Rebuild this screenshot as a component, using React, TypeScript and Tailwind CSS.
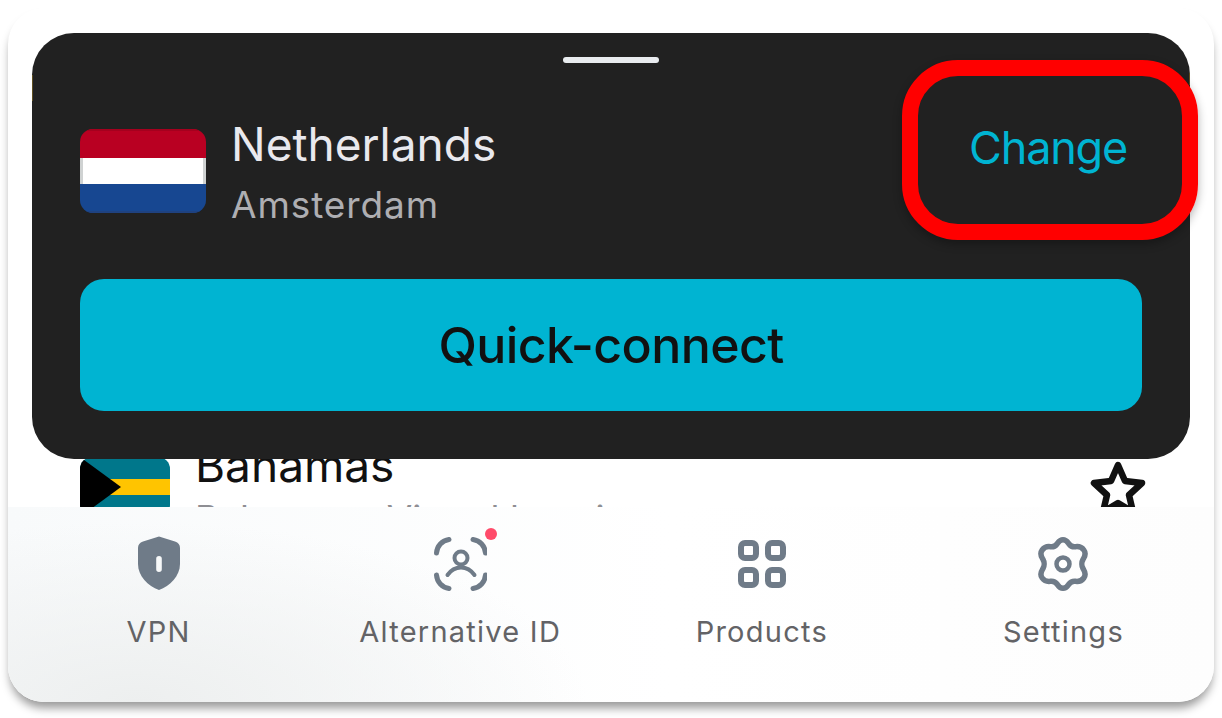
const navLabel = 'text-[29px] leading-[36px] tracking-[0.043em] text-[#636366] whitespace-nowrap'

function ShieldIcon() {
  return (
    <svg width="44" height="56" viewBox="0 0 44 56">
      <path
        fillRule="evenodd"
        fill="#6f7b88"
        d="M22 0.5 L38 5.500 Q43 7.200 43 12 V28 C43 40 33 50 22 54 C11 50 1 40 1 28 V12 Q1 7.200 6 5.500 Z M22 20 a2.800 2.800 0 0 0 -2.800 2.800 v10.400 a2.800 2.800 0 0 0 5.600 0 v-10.400 a2.800 2.800 0 0 0 -2.800 -2.800 Z"
      />
    </svg>
  )
}

function FaceIdIcon() {
  return (
    <svg width="54" height="54" viewBox="-1 0 54 54" fill="none" stroke="#6f7b88" strokeLinecap="round">
      <g strokeWidth="5">
        <path d="M2.500 16 C3 9 8 3.500 15 2.500" />
        <path d="M51.500 16 C51 9 46 3.500 39 2.500" />
        <path d="M2.500 38 C3 45 8 50.500 15 51.500" />
        <path d="M51.500 38 C51 45 46 50.500 39 51.500" />
      </g>
      <g strokeWidth="4">
        <circle cx="27" cy="21" r="6.500" />
        <path d="M13.500 38 C17 33 22 30.500 27 30.500 C32 30.500 37 33 40.500 38" />
      </g>
    </svg>
  )
}

function GridIcon() {
  return (
    <svg width="48" height="48" viewBox="0 0 48 48" fill="none" stroke="#6f7b88" strokeWidth="6">
      <rect x="3" y="3" width="15" height="15" rx="4" />
      <rect x="30" y="3" width="15" height="15" rx="4" />
      <rect x="3" y="30" width="15" height="15" rx="4" />
      <rect x="30" y="30" width="15" height="15" rx="4" />
    </svg>
  )
}

function GearIcon() {
  return (
    <svg width="52" height="54" viewBox="0 0 52 54" fill="none" stroke="#6f7b88" strokeWidth="5.5" strokeLinejoin="round">
      <path d="M26 2.750 C29.500 2.750 30.500 5 32 7 C33.500 9 36 10 38.500 9.700 C41.500 9.300 44.500 9.800 46.800 13 C49.800 17 47.500 20 46 22.500 C44.500 25 44.500 29 46 31.500 C47.500 34 49.800 37 46.800 41 C44.500 44.200 41.500 44.700 38.500 44.300 C36 44 33.500 45 32 47 C30.500 49 29.500 51.250 26 51.250 C22.500 51.250 21.500 49 20 47 C18.500 45 16 44 13.500 44.300 C10.500 44.700 7.500 44.200 5.200 41 C2.200 37 4.500 34 6 31.500 C7.500 29 7.500 25 6 22.500 C4.500 20 2.200 17 5.200 13 C7.500 9.800 10.500 9.300 13.500 9.700 C16 10 18.500 9 20 7 C21.500 5 22.500 2.750 26 2.750 Z" />
      <circle cx="26" cy="27" r="6.500" strokeWidth="4.500" />
    </svg>
  )
}

function NavItem({ icon, label, dot }: { icon: React.ReactNode; label: string; dot?: boolean }) {
  return (
    <div className="flex flex-col items-center w-[301px]">
      <div className="relative h-[60px] flex items-center justify-center">
        {icon}
        {dot && <span className="absolute -top-[6px] -right-[10px] w-[12px] h-[12px] rounded-full bg-[#ff4b6a]" />}
      </div>
      <span className={`${navLabel} mt-[20px]`}>{label}</span>
    </div>
  )
}

export default function App() {
  return (
    <div className="relative w-[1222px] h-[718px] bg-white p-[8px] pb-[16px] overflow-hidden font-['Inter',sans-serif]">
      <div className="h-full pt-[25px] flex flex-col rounded-[36px] bg-white overflow-hidden shadow-[0_8px_10px_-2px_rgba(0,0,0,0.4)]">
        {/* Bottom sheet */}
        <div className="relative z-10 shrink-0 mx-[24px] h-[426px] rounded-[42px] bg-[#212121] px-[48px] pt-[24px]">
          <span className="absolute left-0 top-[42px] w-px h-[26px] bg-[#5f4f20]" />
          <span className="absolute right-0 top-[40px] w-px h-[12px] bg-[#5f4f20]" />
          <div className="mx-auto w-[96px] h-[6px] rounded-full bg-[#e9ecef]" />
          <div className="flex items-center justify-between h-[104px] mt-[56px]">
            <div className="flex items-center gap-[25px]">
              <div className="w-[126px] h-[84px] rounded-[13px] overflow-hidden flex flex-col">
                <div className="flex-1 bg-[#b90022] border-t-2 border-[#a5001e]" />
                <div className="flex-1 bg-white border-x-[3px] border-[#cfd2d2]" />
                <div className="flex-1 bg-[#174791] border-b-2 border-[#1f4280]" />
              </div>
              <div className="flex flex-col mt-[3px] font-[370]">
                <span className="text-[46px] leading-[54px] text-[#e9e9ee]">Netherlands</span>
                <span className="text-[37px] leading-[46px] mt-[11px] tracking-[0.024em] text-[#aeaeb2]">Amsterdam</span>
              </div>
            </div>
            <span className="text-[45px] leading-[54px] font-[370] tracking-[-0.027em] text-[#00b4d2] mr-[15px] mb-[46px]">Change</span>
          </div>
          <div className="mt-[56px] h-[132px] rounded-[24px] bg-[#00b4d2] flex items-center justify-center text-[50px] tracking-[-0.012em] font-[450] text-[#111111]">
            Quick-connect
          </div>
        </div>

        {/* List row, partly behind the sheet */}
        <div className="flex-1 -mt-[27px] pl-[72px] pr-[68px] overflow-hidden flex items-start justify-between">
          <div className="flex gap-[25px]">
            <div className="w-[90px] h-[60px] rounded-[12px] overflow-hidden relative bg-[#00778b] mt-[25px] shrink-0">
              <div className="absolute left-0 right-0 top-[22px] h-[16px] bg-[#ffc400]" />
              <svg className="absolute left-0 top-0" width="42" height="60" viewBox="0 0 42 60">
                <path d="M0 0 L41 30 L0 60 Z" fill="#000" />
              </svg>
            </div>
            <div className="flex flex-col font-[370]">
              <span className="text-[46px] leading-[50px] mt-[8px] text-[#111111]">Bahamas</span>
              <span className="text-[37px] leading-[46px] text-[#8e8e93] mt-[6px] whitespace-nowrap">Bahamas · Virtual location</span>
            </div>
          </div>
          <svg className="mt-[29px] shrink-0" width="56" height="54" viewBox="0 0 56 54" fill="none" stroke="#111111" strokeWidth="6.500" strokeLinejoin="round">
            <path d="M28 4 L35 20 L52 22 L39 34 L43 51 L28 42 L13 51 L17 34 L4 22 L21 20 Z" />
          </svg>
        </div>

        {/* Tab bar */}
        <div className="shrink-0 h-[195px] flex justify-between pt-[27px] bg-[radial-gradient(ellipse_450px_180px_at_130px_100%,#edefef_0%,rgba(237,239,239,0)_100%),linear-gradient(to_right,#f8fafb,#ffffff_55%,#fdfdfd)]">
          <NavItem icon={<ShieldIcon />} label="VPN" />
          <NavItem icon={<FaceIdIcon />} label="Alternative ID" dot />
          <NavItem icon={<GridIcon />} label="Products" />
          <NavItem icon={<GearIcon />} label="Settings" />
        </div>
      </div>

      {/* Red highlight round Change */}
      <div className="absolute left-[902px] top-[60px] w-[296px] h-[180px] rounded-[56px] border-[16px] border-[#ff0000] z-30 shadow-[0_4px_10px_rgba(0,0,0,0.3)]" />
    </div>
  )
}
